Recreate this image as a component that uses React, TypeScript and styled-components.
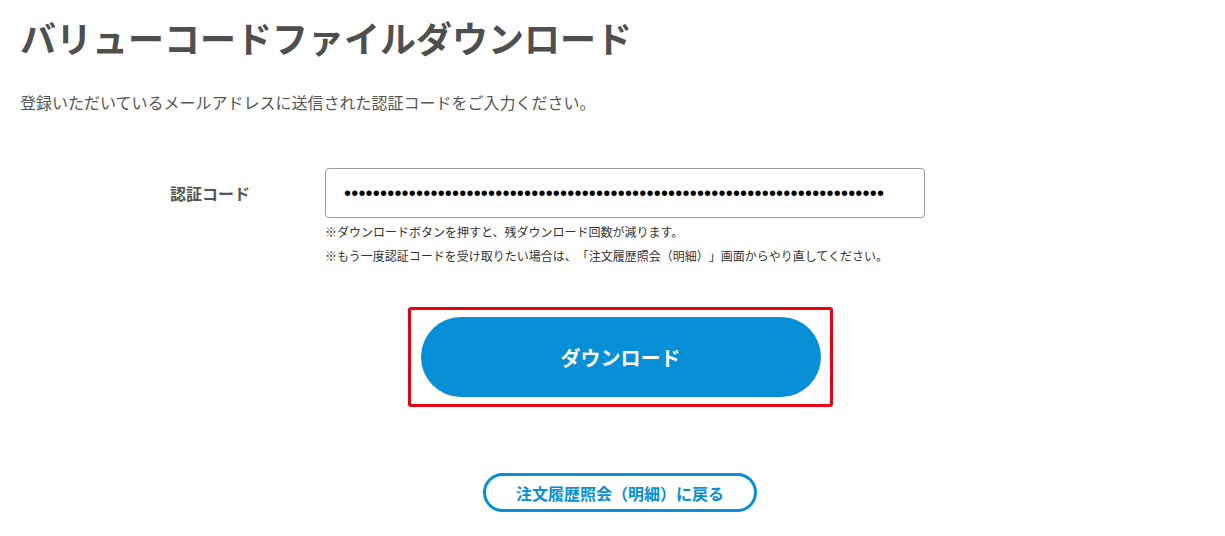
import styled, { createGlobalStyle } from "styled-components";

const GlobalStyle = createGlobalStyle`
  html, body {
    margin: 0;
    padding: 0;
    background: #fff;
  }
  body {
    font-family: "Noto Sans CJK JP", "Noto Sans", sans-serif;
    color: #555;
    text-spacing-trim: space-all;
  }
`;

const BLUE = "#068ed6";

const Page = styled.div`
  width: 1200px;
  padding: 12px 5px 40px 20px;
  box-sizing: content-box;
`;

const Title = styled.h1`
  margin: 0;
  font-size: 36px;
  line-height: 50px;
  font-weight: 700;
  color: #4f4f4f;
`;

const Lead = styled.p`
  margin: 28px 0 0;
  font-size: 16px;
  line-height: 24px;
  color: #555;
`;

const Form = styled.div`
  margin-top: 54px;
  display: flex;
  flex-direction: column;
  align-items: center;
`;

const FieldRow = styled.div`
  align-self: flex-start;
  margin-left: 150px;
  display: grid;
  grid-template-columns: 155px 600px;
  align-items: center;
`;

const Label = styled.label`
  font-size: 16px;
  font-weight: 700;
  color: #555;
  line-height: 50px;
`;

const CodeInput = styled.input`
  width: 600px;
  height: 50px;
  box-sizing: border-box;
  border: 1px solid #9a9a9a;
  border-radius: 4px;
  padding: 0 0 0 18px;
  font-family: "Liberation Sans", Arial, sans-serif;
  font-size: 20px;
  letter-spacing: 0.2px;
  color: #000;
  outline: none;
  background: #fff;
`;

const Notes = styled.div`
  grid-column: 2;
  margin-top: 2px;
`;

const Note = styled.p`
  margin: 0;
  font-size: 12px;
  line-height: 24px;
  color: #333;
`;

const Highlight = styled.div`
  margin-top: 39px;
  border: 3px solid #e60012;
  border-radius: 3px;
  padding: 7px 9px 7px 10px;
`;

const PrimaryButton = styled.button`
  display: block;
  width: 400px;
  height: 80px;
  border: none;
  border-radius: 40px;
  background: ${BLUE};
  color: #fff;
  font-family: "Noto Sans CJK JP", "Noto Sans", sans-serif;
  font-size: 20px;
  font-weight: 700;
  cursor: pointer;
`;

const BackButton = styled.button`
  margin-top: 66px;
  width: 274px;
  height: 39px;
  box-sizing: border-box;
  border: 3px solid ${BLUE};
  border-radius: 20px;
  background: #fff;
  color: ${BLUE};
  font-family: "Noto Sans CJK JP", "Noto Sans", sans-serif;
  font-size: 16px;
  font-weight: 700;
  padding: 0;
  cursor: pointer;
`;

export default function App() {
  const code = "x".repeat(75);
  return (
    <>
      <GlobalStyle />
      <Page>
        <Title>バリューコードファイルダウンロード</Title>
        <Lead>登録いただいているメールアドレスに送信された認証コードをご入力ください。</Lead>
        <Form>
          <FieldRow>
            <Label htmlFor="code">認証コード</Label>
            <CodeInput id="code" type="password" value={code} readOnly />
            <Notes>
              <Note>※ダウンロードボタンを押すと、残ダウンロード回数が減ります。</Note>
              <Note>
                ※もう一度認証コードを受け取りたい場合は、「注文履歴照会（明細）」画面からやり直してください。
              </Note>
            </Notes>
          </FieldRow>
          <Highlight>
            <PrimaryButton>ダウンロード</PrimaryButton>
          </Highlight>
          <BackButton>注文履歴照会（明細）に戻る</BackButton>
        </Form>
      </Page>
    </>
  );
}
